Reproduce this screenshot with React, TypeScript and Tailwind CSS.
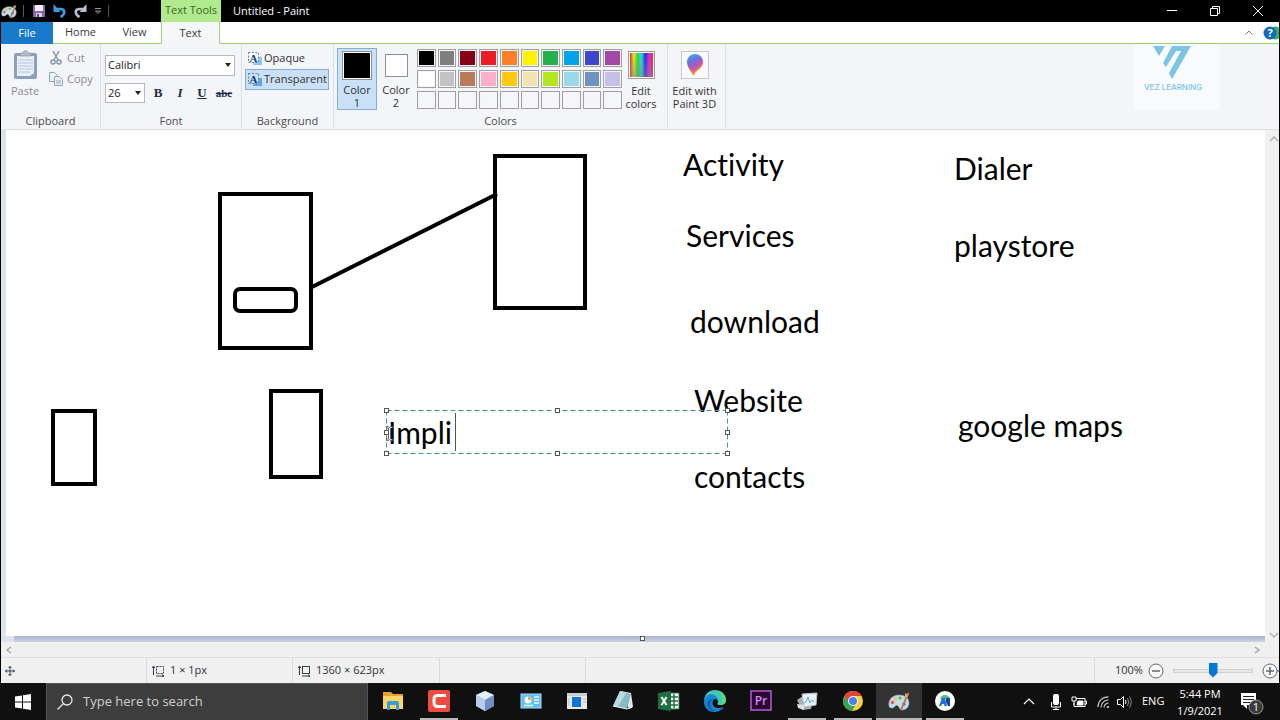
import { useState } from "react";
import type { ReactNode } from "react";

const SWATCHES = [
  "#000000", "#7f7f7f", "#880015", "#ed1c24", "#ff7f27", "#fff200", "#22b14c", "#00a2e8", "#3f48cc", "#a349a4",
  "#ffffff", "#c3c3c3", "#b97a57", "#ffaec9", "#ffc90e", "#efe4b0", "#b5e61d", "#99d9ea", "#7092be", "#c8bfe7",
  "", "", "", "", "", "", "", "", "", "",
];

const NOTES = [
  { text: "Activity", pos: "left-[677px] top-[16px]" },
  { text: "Services", pos: "left-[680px] top-[87px]" },
  { text: "download", pos: "left-[684px] top-[173px]" },
  { text: "Website", pos: "left-[688px] top-[252px]" },
  { text: "contacts", pos: "left-[688px] top-[328px]" },
  { text: "Dialer", pos: "left-[948px] top-[20px]" },
  { text: "playstore", pos: "left-[948px] top-[97px]" },
  { text: "google maps", pos: "left-[952px] top-[277px]" },
];

const HANDLES = [
  "-left-[2px] -top-[2px]",
  "left-1/2 -ml-[2px] -top-[2px]",
  "-right-[2px] -top-[2px]",
  "-left-[2px] top-1/2 -mt-[2px]",
  "-right-[2px] top-1/2 -mt-[2px]",
  "-left-[2px] -bottom-[2px]",
  "left-1/2 -ml-[2px] -bottom-[2px]",
  "-right-[2px] -bottom-[2px]",
];

function PaletteIcon({ className }: { className: string }) {
  return (
    <svg viewBox="0 0 22 20" className={className} aria-hidden="true">
      <path d="M1 15C0 9 4 4 11 4c6 0 10 3 10 8 0 4-3 7-7 7-3 0-2-3-4-4-2-2-3 1-5 2-2 0-4 0-4-2z" fill="#c3dcea" stroke="#7fa9c2" strokeWidth=".6" />
      <circle cx="4.5" cy="11.5" r="1.7" fill="#e8574a" />
      <circle cx="7.5" cy="8" r="1.7" fill="#f3c12d" />
      <circle cx="12" cy="7" r="1.6" fill="#57b552" />
      <circle cx="16" cy="13" r="1.7" fill="#4a7fd0" />
      <path d="M13 19L19 5" stroke="#c56b31" strokeWidth="1.8" />
      <path d="M17 6l0-4 2 1 2-2-1 5-2 1z" fill="#d9a067" />
    </svg>
  );
}

function TextBgIcon({ filled }: { filled?: boolean }) {
  return (
    <svg viewBox="0 0 16 15" className="h-[15px] w-4 shrink-0" aria-hidden="true">
      <path d="M8 6h7v8H6z" fill={filled ? "#5ba7ea" : "#8cc5f5"} />
      <rect x="1.500" y="1.500" width="10" height="10" fill={filled ? "#c9e0f7" : "#fff"} stroke="#5484b0" strokeDasharray="2 1.5" />
      <text x="6.5" y="10.5" textAnchor="middle" fontSize="11" fontWeight="bold" fontFamily="Liberation Serif, serif" fill="#173a63">A</text>
    </svg>
  );
}

function Group({ label, className, children }: { label: string; className: string; children: ReactNode }) {
  return (
    <section aria-label={label || "Paint 3D"} className={`flex flex-col border-r border-[#dcdfe4] ${className}`}>
      <div className="flex h-[69px] items-start">{children}</div>
      <div className="h-4 text-center leading-4 text-[#4c4c4c]">{label}</div>
    </section>
  );
}

function TitleBar() {
  return (
    <header className="flex h-[22px] items-stretch bg-black text-white">
      <div className="flex w-[160px] items-center">
        <PaletteIcon className="h-4 w-4" />
        <span className="ml-[6px] mr-[8px] h-3 w-px bg-[#5a5a5a]" />
        <button aria-label="Save">
          <svg viewBox="0 0 14 14" className="h-[14px] w-[14px]">
            <path d="M1 1h12v12H1z" fill="#8863ae" />
            <path d="M3 1h8v6H3z" fill="#f2eef8" />
            <path d="M4 9h6v4H4z" fill="#d5d8e4" />
            <path d="M5 10h2v3H5z" fill="#59447c" />
          </svg>
        </button>
        <button aria-label="Undo" className="ml-[7px]">
          <svg viewBox="0 0 14 14" className="h-[14px] w-[14px]" fill="none">
            <path d="M3 5h4.500c5 0 5 5 0 8" stroke="#3d9be0" strokeWidth="2.600" />
            <path d="M.5 5.500V0l7 8H.5z" fill="#3d9be0" />
          </svg>
        </button>
        <button aria-label="Redo" className="ml-[6px]">
          <svg viewBox="0 0 14 14" className="h-[14px] w-[14px]" fill="none">
            <path d="M11 5H6.500c-5 0-5 5 0 8" stroke="#b4bfcb" strokeWidth="2.600" />
            <path d="M13.500 5.500V0l-7 8h7z" fill="#b4bfcb" />
          </svg>
        </button>
        <button aria-label="Customize Quick Access Toolbar" className="ml-[7px]">
          <svg viewBox="0 0 8 7" className="h-[7px] w-2" fill="none" stroke="#999">
            <path d="M1 .5h6M1.500 3l2.500 2.500L6.500 3z" />
          </svg>
        </button>
        <span className="ml-[6px] h-3 w-px bg-[#5a5a5a]" />
      </div>
      <div className="w-[60px] whitespace-nowrap bg-[#b0ea8c] text-center leading-5 text-[#3c6726]">Text Tools</div>
      <h1 className="pl-3 text-[11px] leading-[22px]">Untitled - Paint</h1>
      <div className="ml-auto flex">
        <button aria-label="Minimize" className="flex w-[42px] items-center justify-center">
          <svg viewBox="0 0 10 10" className="h-[10px] w-[10px]" stroke="#fff"><path d="M0 4.500h10" /></svg>
        </button>
        <button aria-label="Restore" className="flex w-[43px] items-center justify-center">
          <svg viewBox="0 0 10 10" className="h-[10px] w-[10px]" fill="none" stroke="#fff">
            <path d="M.5 2.500h7v7h-7zM2.500 2V.5h7v7H8" />
          </svg>
        </button>
        <button aria-label="Close" className="flex w-[43px] items-center justify-center">
          <svg viewBox="0 0 10 10" className="h-[10px] w-[10px]" stroke="#fff"><path d="M0 0l10 10M10 0L0 10" /></svg>
        </button>
      </div>
    </header>
  );
}

function Tabs() {
  return (
    <nav className="flex h-[22px] border-b border-[#9bd672] bg-white text-[11px] text-[#3a3a3a]">
      <button className="-mb-px w-[52px] bg-[#1979ca] text-white">File</button>
      <button className="w-[55px]">Home</button>
      <button className="w-[53px]">View</button>
      <button className="-mb-px w-[59px] border-x border-[#9bd672] bg-[#f5f6f7]">Text</button>
      <div className="ml-auto flex items-center overflow-hidden">
        <button aria-label="Collapse ribbon" className="mr-[10px]">
          <svg viewBox="0 0 8 5" className="h-[5px] w-2" fill="none" stroke="#777"><path d="M.5 4.500L4 1l3.500 3.500" /></svg>
        </button>
        <button aria-label="Help">
          <svg viewBox="0 0 16 14" className="h-[14px] w-4">
            <circle cx="12" cy="7" r="6.500" fill="#2fb36c" />
            <circle cx="7" cy="7" r="6.500" fill="#1269bd" />
            <text x="7" y="11" textAnchor="middle" fontSize="11" fontWeight="bold" fill="#fff" fontFamily="Open Sans, sans-serif">?</text>
          </svg>
        </button>
      </div>
    </nav>
  );
}

function Ribbon() {
  const [background, setBackground] = useState("transparent");

  return (
    <div className="flex h-[86px] items-stretch border-b border-[#dadbdc] bg-[#f4f5f8] text-[11px] text-[#333]">
      <Group label="Clipboard" className="w-[100px]">
        <button className="ml-[10px] mt-[6px] flex flex-col items-center text-[#8b8b8b]">
          <svg viewBox="0 0 25 30" className="h-[30px] w-[25px]">
            <rect x="1" y="3" width="23" height="26" rx="2" fill="#8e9fb9" />
            <path d="M4 6h17v17l-4 3H4z" fill="#e8eff8" />
            <path d="M5 10h15M5 13h15M5 16h15M5 19h15M5 22h12" stroke="#b6c7de" />
            <path d="M7 6V3h3c0-3 5-3 5 0h3v3z" fill="#b1bac8" stroke="#8995a8" strokeWidth=".7" />
          </svg>
          <span className="mt-1 leading-[14px]">Paste</span>
        </button>
        <div className="ml-[10px] mt-[5px] flex flex-col gap-[3px] text-[#8b8b8b]">
          <button className="flex h-[18px] items-center gap-1">
            <svg viewBox="0 0 14 14" className="h-[14px] w-[14px]" fill="none" stroke="#8796ad" strokeWidth="1.500">
              <path d="M4 0l5 9M10 0L5 9" />
              <circle cx="4" cy="11" r="2" />
              <circle cx="10" cy="11" r="2" />
            </svg>
            Cut
          </button>
          <button className="flex h-[18px] items-center gap-1">
            <svg viewBox="0 0 14 14" className="h-[14px] w-[14px]" fill="#edf2f9" stroke="#94a5be">
              <path d="M.5.5h5l3 3v6h-8z" />
              <path d="M5.500 4.500h5l3 3v6h-8zM7 9h5M7 11h5" />
            </svg>
            Copy
          </button>
        </div>
      </Group>

      <Group label="Font" className="w-[141px]">
        <div className="flex flex-1 flex-col gap-[7px] pl-1 pr-[6px] pt-[11px]">
          <div className="relative">
            <select aria-label="Font family" className="block h-[21px] w-full appearance-none border border-[#b5b9c0] bg-white pl-[2px] text-[11px] text-[#222]">
              <option>Calibri</option>
            </select>
            <span className="pointer-events-none absolute right-1 top-2 border-x-[3px] border-t-[4px] border-x-transparent border-t-[#222]" />
          </div>
          <div className="flex h-[20px] items-center">
            <div className="relative mr-[2px]">
              <select aria-label="Font size" className="block h-[20px] w-10 appearance-none border border-[#b5b9c0] bg-white pl-[2px] text-[11px] text-[#222]">
                <option>26</option>
              </select>
              <span className="pointer-events-none absolute right-1 top-2 border-x-[3px] border-t-[4px] border-x-transparent border-t-[#222]" />
            </div>
            <div className="flex font-['Liberation_Serif',serif] text-[13px] font-bold text-[#1c2d4a]">
              <button aria-label="Bold" className="w-[22px]">B</button>
              <button aria-label="Italic" className="w-[22px] italic">I</button>
              <button aria-label="Underline" className="w-[22px] underline">U</button>
              <button aria-label="Strikethrough" className="w-[22px] text-[11px] line-through">abc</button>
            </div>
          </div>
        </div>
      </Group>

      <Group label="Background" className="w-[92px]">
        <div className="flex flex-col gap-px pl-[3px] pt-1">
          <button onClick={() => setBackground("opaque")} className={`flex h-5 items-center gap-px border px-px ${background === "opaque" ? "border-[#84acdd] bg-[#c9e0f7]" : "border-transparent"}`}>
            <TextBgIcon />
            Opaque
          </button>
          <button onClick={() => setBackground("transparent")} className={`flex h-[21px] items-center gap-px border px-px ${background === "transparent" ? "border-[#84acdd] bg-[#c9e0f7]" : "border-transparent"}`}>
            <TextBgIcon filled />
            Transparent
          </button>
        </div>
      </Group>

      <Group label="Colors" className="w-[334px]">
        <button className="ml-[3px] mt-1 flex h-[62px] w-10 flex-col items-center border border-[#84acdd] bg-[#c9e0f7] pt-[2px] leading-[13px]">
          <span className="mb-[3px] h-[29px] w-[30px] shrink-0 border border-[#8a8f98] bg-black outline outline-1 -outline-offset-2 outline-white" />
          <span>Color</span>
          <span>1</span>
        </button>
        <button className="mt-1 flex h-[62px] w-[38px] flex-col items-center pt-[6px] leading-[13px]">
          <span className="mb-[6px] h-[23px] w-[23px] shrink-0 border border-[#8a8f98] bg-white" />
          <span>Color</span>
          <span>2</span>
        </button>
        <div className="ml-[2px] mt-[5px] grid w-[205px] grid-cols-10 gap-x-[2px] gap-y-[3px]">
          {SWATCHES.map((color, i) => (
            <button key={i} aria-label={color || "Custom color"} className="h-[18px] border border-[#a0a0a0] p-px">
              <span className="block h-full" style={{ backgroundColor: color || "#f5f6f9" }} />
            </button>
          ))}
        </div>
        <button className="mt-1 flex w-[38px] flex-col items-center pt-[3px] leading-[13px]">
          <span className="mb-[5px] h-7 w-[27px] shrink-0 border border-[#9b9b9b] bg-white p-px">
            <span className="block h-full bg-[linear-gradient(to_bottom,transparent,#8888),linear-gradient(to_right,#e22,#ee2,#2d3,#2dd,#22e,#e2d,#e23)]" />
          </span>
          <span>Edit</span>
          <span>colors</span>
        </button>
      </Group>

      <Group label="" className="w-[58px]">
        <button className="mt-1 flex w-full flex-col items-center whitespace-nowrap pr-1 pt-[3px] leading-[13px]">
          <svg viewBox="0 0 28 28" className="mb-[5px] h-7 w-7 shrink-0">
            <defs>
              <linearGradient id="drop" x1="0" y1="0" x2=".4" y2="1">
                <stop offset="0" stopColor="#21c4ee" />
                <stop offset=".4" stopColor="#6b71dd" />
                <stop offset=".65" stopColor="#d94b9b" />
                <stop offset="1" stopColor="#f6a21c" />
              </linearGradient>
            </defs>
            <rect x=".5" y=".5" width="27" height="27" fill="#fafafa" stroke="#c8c8c8" />
            <path d="M14 3c5 0 8 4 8 8 0 6-6 7-10 14-1-5-6-8-6-14 0-4 3-8 8-8z" fill="url(#drop)" />
            <path d="M14 8c3 0 5 2 4 5-1 3-4 4-5 7-2-3-3-5-3-8 0-2 2-4 4-4z" fill="#8b66e0" opacity=".7" />
          </svg>
          <span>Edit with</span>
          <span>Paint 3D</span>
        </button>
      </Group>

      <div className="ml-auto mr-[59px] h-[66px] w-[87px] bg-[#f9fafd] pr-[7px] text-center font-['Inter',sans-serif] text-[8px] font-medium text-[#7cc3e4]">
        <svg viewBox="0 0 40 33" className="mx-auto mt-[2px] h-[33px] w-10" fill="#7cc3e4">
          <path d="M0 0h12L6 10z" />
          <path d="M19 0h19L19 33l-3-6L28 5h-5l-10 16-3-4z" />
        </svg>
        <div className="mt-[2px] whitespace-nowrap leading-[12px]">VEZ LEARNING</div>
      </div>
    </div>
  );
}

function Canvas() {
  const [draft, setDraft] = useState("Impli");

  return (
    <main className="flex min-h-[506px] flex-1 bg-[#dde1ee]">
      <div className="ml-[5px] flex flex-1 flex-col">
        <div className="relative flex-1 overflow-hidden bg-white font-['Lato',sans-serif] text-[30px] leading-9 text-black [font-variant-ligatures:none]">
          <svg className="absolute left-0 top-0 h-[500px] w-[700px]" fill="none" stroke="#000" strokeWidth="4" aria-hidden="true">
            <rect x="214" y="64" width="91" height="154" />
            <rect x="229" y="159" width="61" height="22" rx="5" />
            <path d="M306 157L491 64" />
            <rect x="489" y="26" width="90" height="152" />
            <rect x="47" y="281" width="42" height="73" />
            <rect x="265" y="261" width="50" height="86" />
          </svg>
          {NOTES.map((note) => (
            <p key={note.text} className={`absolute whitespace-nowrap ${note.pos}`}>{note.text}</p>
          ))}
          <div className="absolute left-[380px] top-[280px] h-11 w-[342px]">
            <svg className="absolute inset-0 h-full w-full" fill="none" stroke="#4a90ae" strokeDasharray="5 3" aria-hidden="true">
              <path d="M.5.5h341M.5.5v43M.5 43.500h341M341.500.5v43" />
            </svg>
            <input
              aria-label="Canvas text"
              value={draft}
              onChange={(e) => setDraft(e.target.value)}
              className="relative h-full w-full bg-transparent pl-[2px] outline-none"
            />
            <span className="absolute left-[69px] top-[3px] h-[38px] w-px bg-[#555]" />
            {HANDLES.map((pos) => (
              <span key={pos} className={`absolute h-[5px] w-[5px] border border-[#555] bg-white ${pos}`} />
            ))}
            <svg viewBox="0 0 7 15" className="absolute left-0 top-4 h-[15px] w-[7px]" fill="#fff" stroke="#444" strokeWidth=".8" aria-hidden="true">
              <path d="M.5.5h2l1 1 1-1h2v1.500h-2v11h2v1.500h-2l-1-1-1 1h-2V13h2V2h-2z" />
            </svg>
          </div>
        </div>
        <div className="relative ml-2 h-[6px] bg-linear-to-b from-[#aab3cf] to-[#ccd2e3]">
          <span className="absolute left-1/2 top-0 h-[5px] w-[5px] border border-[#555] bg-white" />
        </div>
      </div>
      <div className="flex w-[14px] flex-col items-end justify-between bg-[#f0f0f0] pb-1 pt-[6px]">
        <svg viewBox="0 0 10 6" className="h-[6px] w-[10px]" fill="none" stroke="#b3b3b3" strokeWidth="1.500"><path d="M1 5l4-4 4 4" /></svg>
        <svg viewBox="0 0 10 6" className="h-[6px] w-[10px]" fill="none" stroke="#b3b3b3" strokeWidth="1.500"><path d="M1 1l4 4 4-4" /></svg>
      </div>
    </main>
  );
}

function StatusBar() {
  return (
    <footer className="bg-[#f0f0f0] text-[11px] text-[#333]">
      <div className="flex h-4 items-center justify-between border-b border-[#dedede] pl-[5px] pr-[19px]">
        <svg viewBox="0 0 6 8" className="h-2 w-[6px]" fill="none" stroke="#aaa" strokeWidth="1.500"><path d="M5 1L1 4l4 3" /></svg>
        <svg viewBox="0 0 6 8" className="h-2 w-[6px]" fill="none" stroke="#aaa" strokeWidth="1.500"><path d="M1 1l4 3-4 3" /></svg>
      </div>
      <div className="flex h-[25px] items-stretch overflow-hidden">
        <div className="flex w-[146px] items-center border-r border-[#dadada] pl-1">
          <svg viewBox="0 0 10 10" className="h-[10px] w-[10px]" fill="none" stroke="#37404f">
            <path d="M5 0v10M0 5h10M3.500 2L5 .5 6.500 2M3.500 8L5 9.500 6.500 8M2 3.500L.5 5 2 6.500M8 3.500L9.500 5 8 6.500" />
          </svg>
        </div>
        <div className="flex w-[146px] items-center gap-[5px] border-r border-[#dadada] pl-[5px]">
          <svg viewBox="0 0 13 12" className="h-3 w-[13px]" fill="none" stroke="#37404f">
            <path d="M1.500 10V1M0 3l1.500-2L3 3M4 11h8M10 9.500l2 1.500-2 1" />
            <rect x="4.500" y="1.500" width="7" height="7" strokeDasharray="2 1" />
          </svg>
          1 × 1px
        </div>
        <div className="flex w-[147px] items-center gap-[5px] border-r border-[#dadada] pl-[5px]">
          <svg viewBox="0 0 13 12" className="h-3 w-[13px]" fill="none" stroke="#37404f">
            <path d="M1.500 10V1M0 3l1.500-2L3 3M4 11h8M10 9.500l2 1.500-2 1" />
            <rect x="4.500" y="1.500" width="7" height="7" />
          </svg>
          1360 × 623px
        </div>
        <div className="w-[146px] border-r border-[#dadada]" />
        <div className="ml-auto flex items-center border-l border-[#dadada] pl-5">
          <span className="w-[33px]">100%</span>
          <button aria-label="Zoom out">
            <svg viewBox="0 0 16 16" className="h-4 w-4" fill="#fafafa" stroke="#666"><circle cx="8" cy="8" r="7" /><path d="M4 8h8" strokeWidth="1.500" /></svg>
          </button>
          <input
            type="range"
            aria-label="Zoom"
            defaultValue={50}
            className="mx-[9px] h-4 w-20 appearance-none bg-transparent [&::-webkit-slider-runnable-track]:h-1 [&::-webkit-slider-runnable-track]:border [&::-webkit-slider-runnable-track]:border-[#d0d0d0] [&::-webkit-slider-runnable-track]:bg-[#e7e7e7] [&::-webkit-slider-thumb]:-mt-[7px] [&::-webkit-slider-thumb]:h-[15px] [&::-webkit-slider-thumb]:w-[9px] [&::-webkit-slider-thumb]:appearance-none [&::-webkit-slider-thumb]:bg-[#0078d7] [&::-webkit-slider-thumb]:[clip-path:polygon(0_0,100%_0,100%_70%,50%_100%,0_70%)]"
          />
          <button aria-label="Zoom in">
            <svg viewBox="0 0 17 16" className="h-4 w-[17px]" fill="#fafafa" stroke="#666"><circle cx="8" cy="8" r="7" /><path d="M4 8h8M8 4v8" strokeWidth="1.500" /><path d="M15 8h2" stroke="#2b91c4" strokeWidth="1.500" /></svg>
          </button>
        </div>
      </div>
    </footer>
  );
}

const APPS: { name: string; running?: boolean; active?: boolean; icon: ReactNode }[] = [
  {
    name: "File Explorer",
    icon: (
      <>
        <path d="M1 2h8l2 2h10v15H1z" fill="#e2a32b" />
        <path d="M1 6h20v13H1z" fill="#fbd565" />
        <path d="M5 20v-7q0-2 2-2h8q2 0 2 2v7h-3v-5H8v5z" fill="#3b9bdc" />
      </>
    ),
  },
  {
    name: "Camtasia",
    running: true,
    icon: (
      <>
        <rect width="22" height="22" rx="2" fill="#ef4b3f" />
        <path d="M18 5.500H10Q6 5.500 6 9v4q0 3.500 4 3.500h8" fill="none" stroke="#fff" strokeWidth="3" />
      </>
    ),
  },
  {
    name: "VirtualBox",
    icon: (
      <>
        <path d="M11 1l9 4v11l-9 5-9-5V5z" fill="#8fa8d4" />
        <path d="M11 1l9 4-9 5-9-5z" fill="#e3eefb" />
        <path d="M11 10l9-5v11l-9 5z" fill="#728ec4" />
        <path d="M2 5l9 5v11l-9-5z" fill="#b9ccec" />
      </>
    ),
  },
  {
    name: "Control Panel",
    icon: (
      <>
        <rect x="1" y="4" width="20" height="14" fill="#62bdf0" stroke="#a9defa" />
        <circle cx="8" cy="10" r="3.500" fill="#fff" />
        <path d="M8 10V6a4 4 0 0 1 3 4z" fill="#f0a63a" />
        <path d="M14 7h5M14 10h5M14 13h5M4 15.500h9" stroke="#e9f8ff" strokeWidth="1.500" />
      </>
    ),
  },
  {
    name: "System Configuration",
    icon: (
      <>
        <rect x="1" y="3" width="20" height="16" fill="#e9e9ec" />
        <path d="M1 3h20v3H1z" fill="#c8ced8" />
        <rect x="6" y="7" width="9" height="10" fill="#0f73d8" />
        <path d="M3 8v8M17 9h3M17 12h3" stroke="#b8b8bd" />
      </>
    ),
  },
  {
    name: "Notepad",
    icon: (
      <>
        <path d="M9 1l10 2 2 14-4 2z" fill="#dfe9ed" />
        <path d="M8 1l11 3-4 15-14-3z" fill="#86bac5" />
        <path d="M8 1l6 2-8 14-5-1z" fill="#b8dbe0" />
        <path d="M1 16l14 3 5-2" stroke="#f1f4f5" fill="none" />
      </>
    ),
  },
  {
    name: "Excel",
    icon: (
      <>
        <path d="M10 3h11v16H10z" fill="#fff" stroke="#1d7044" />
        <path d="M12 7h8M12 11h8M12 15h8M16 4v14" stroke="#1d7044" strokeWidth="1.500" />
        <path d="M0 3l13-2v20L0 19z" fill="#1d7044" />
        <path d="M3.500 7l5 8M8.500 7l-5 8" stroke="#fff" strokeWidth="2" />
      </>
    ),
  },
  {
    name: "Edge",
    icon: (
      <>
        <path d="M0 12C0 4 5 0 11 0s11 4 11 10c0 4-3 5-6 5-4 0-2-2-2-4S11 6 7 7c-4 0-7 3-7 5z" fill="#44c8b5" />
        <path d="M0 12C1 5 6 3 10 5c3 1 4 4 4 6-1-2-4-3-5 0-2 5 3 9 11 6-3 4-7 5-10 5C4 22 0 17 0 12z" fill="#1488d6" />
        <path d="M7 11c-2 4 1 10 7 10-8 2-14-5-9-11 1-1 3-1 4 0z" fill="#0c60ac" />
        <path d="M14 1c5 1 8 5 8 9 0 4-3 5-6 5 4-4 2-9-2-14z" fill="#62dc78" opacity=".8" />
      </>
    ),
  },
  {
    name: "Premiere Pro",
    icon: (
      <>
        <rect x="1" y="1" width="20" height="19" fill="#2b0735" stroke="#b55bd5" strokeWidth="1.500" />
        <text x="11" y="15" textAnchor="middle" fontSize="12" fontWeight="600" fill="#d68af0" fontFamily="Open Sans, sans-serif">Pr</text>
      </>
    ),
  },
  {
    name: "Performance Monitor",
    running: true,
    icon: (
      <>
        <path d="M1 10l6-4 10 4-2 9-9 1z" fill="#a8adb2" />
        <path d="M6 4l15-1-1 12-12 2z" fill="#e8f1f5" stroke="#b7bfc4" />
        <path d="M8 13l2-1 2-5 2 6 2-3 2 2" fill="none" stroke="#63a3ca" />
        <path d="M1 14l7 1v5l-6-2z" fill="#e1e1e1" />
      </>
    ),
  },
  {
    name: "Chrome",
    running: true,
    icon: (
      <>
        <circle cx="11" cy="11" r="10" fill="#f8cf3d" />
        <path d="M2.300 6A10 10 0 0 1 19.700 6H11L7 14z" fill="#e14537" />
        <path d="M2.300 6L7 14h7l-4 7A10 10 0 0 1 2.300 6z" fill="#32a557" />
        <circle cx="11" cy="11" r="5" fill="#fff" />
        <circle cx="11" cy="11" r="4" fill="#4685ea" />
      </>
    ),
  },
  { name: "Paint", running: true, active: true, icon: null },
  {
    name: "Android Studio",
    running: true,
    icon: (
      <>
        <circle cx="11" cy="11" r="10" fill="#fff" />
        <path d="M6 9q1-4 5-4t5 4z" fill="#4cc18b" />
        <path d="M5 16L8 8h3l2 8h-2.500l-.5-2H8l-1 2z" fill="#286bd2" />
        <path d="M12 8h4v8h-2l-2-4z" fill="#174791" />
      </>
    ),
  },
];

function Taskbar() {
  return (
    <footer className="flex h-[37px] items-stretch bg-[#101010] text-white">
      <button aria-label="Start" className="flex w-[46px] items-center justify-center">
        <svg viewBox="0 0 16 16" className="h-4 w-4" fill="#fff">
          <path d="M0 2.500L7 1.500v6H0zM8 1.300L16 0v7.500H8zM0 8.500h7v6L0 13.500zM8 8.500h8V16l-8-1.300z" />
        </svg>
      </button>
      <label className="flex w-[322px] items-center border-x border-t border-[#555] bg-[#3d3d3d] pl-[10px]">
        <svg viewBox="0 0 16 16" className="mr-[10px] h-4 w-4 shrink-0" fill="none" stroke="#e8e8e8" strokeWidth="1.300">
          <circle cx="10" cy="6" r="5" />
          <path d="M6.500 9.500L.5 15.500" />
        </svg>
        <input aria-label="Search" placeholder="Type here to search" className="w-full bg-transparent text-[13px] outline-none placeholder:text-[#cfcfcf]" />
      </label>
      <div className="ml-[2px] flex">
        {APPS.map((app) => (
          <button key={app.name} aria-label={app.name} className={`flex w-[46px] flex-col items-center ${app.active ? "bg-[#333]" : ""}`}>
            <span className="flex h-[35px] items-center">
              {app.active ? <PaletteIcon className="h-[22px] w-[22px]" /> : <svg viewBox="0 0 22 22" className="h-[22px] w-[22px]">{app.icon}</svg>}
            </span>
            {app.running && <span className={`h-[2px] bg-[#bdb7b7] ${app.active ? "w-full" : "w-[38px]"}`} />}
          </button>
        ))}
      </div>
      <div className="ml-auto flex items-center text-[11px]">
        <button aria-label="Show hidden icons" className="mr-[16px]">
          <svg viewBox="0 0 12 7" className="h-[7px] w-3" fill="none" stroke="#fff" strokeWidth="1.200"><path d="M1 6l5-5 5 5" /></svg>
        </button>
        <svg viewBox="0 0 10 16" className="mr-[10px] h-4 w-[10px]" fill="none" stroke="#fff" aria-label="Microphone">
          <rect x="2.500" y=".5" width="5" height="10" rx="1" fill="#fff" />
          <path d="M.5 8v5h9V8M5 13v2M2 15.500h6" />
        </svg>
        <svg viewBox="0 0 16 12" className="mr-[10px] h-3 w-4" fill="none" stroke="#fff" aria-label="Battery">
          <path d="M5 2.500h9v8H3V7M14 5h1.500v3H14" />
          <path d="M7 5h5v4H6z" fill="#fff" />
          <path d="M1 1v4h4V1M3 5v4M2 0v2M4 0v2" />
        </svg>
        <svg viewBox="0 0 12 12" className="mr-[8px] h-3 w-3" fill="none" stroke="#ccc" aria-label="Wi-Fi">
          <path d="M1 11A10 10 0 0 1 11.500.8M4 11.500A7.500 7.500 0 0 1 11.500 4M7 11.500A5 5 0 0 1 11.500 7" strokeWidth="1.200" />
          <path d="M10 11.500l1.500-1.500v1.500z" fill="#fff" />
        </svg>
        <svg viewBox="0 0 15 14" className="mr-[10px] h-[14px] w-[15px]" fill="none" stroke="#fff" aria-label="Volume">
          <path d="M.5 4.500h3l3-3v11l-3-3h-3z" />
          <path d="M8.500 5q1 2 0 4" />
          <path d="M10.500 3q2.500 4 0 8M12.500 1.500q3.500 5.500 0 11" stroke="#888" />
        </svg>
        <span className="w-[34px]">ENG</span>
        <div className="w-[48px] whitespace-nowrap text-center leading-[17px]">
          <div>5:44 PM</div>
          <div>1/9/2021</div>
        </div>
        <button aria-label="Notifications, 1 new" className="ml-4 mr-[14px]">
          <svg viewBox="0 0 26 26" className="h-[26px] w-[26px]">
            <path d="M1 4h15v12h-9v4l-4-4H1z" fill="#fff" />
            <path d="M3 7.500h11M3 10.500h11M3 13.500h7" stroke="#222" />
            <circle cx="16" cy="18" r="7" fill="#3b3b3b" stroke="#999" />
            <text x="16" y="22" textAnchor="middle" fontSize="11" fill="#fff" fontFamily="Open Sans, sans-serif">1</text>
          </svg>
        </button>
      </div>
    </footer>
  );
}

export default function App() {
  return (
    <div className="flex min-h-screen flex-col bg-black font-['Open_Sans','Noto_Sans',sans-serif] text-[11px]">
      <div className="mx-px flex flex-1 flex-col">
        <TitleBar />
        <Tabs />
        <Ribbon />
        <Canvas />
        <StatusBar />
      </div>
      <Taskbar />
    </div>
  );
}
